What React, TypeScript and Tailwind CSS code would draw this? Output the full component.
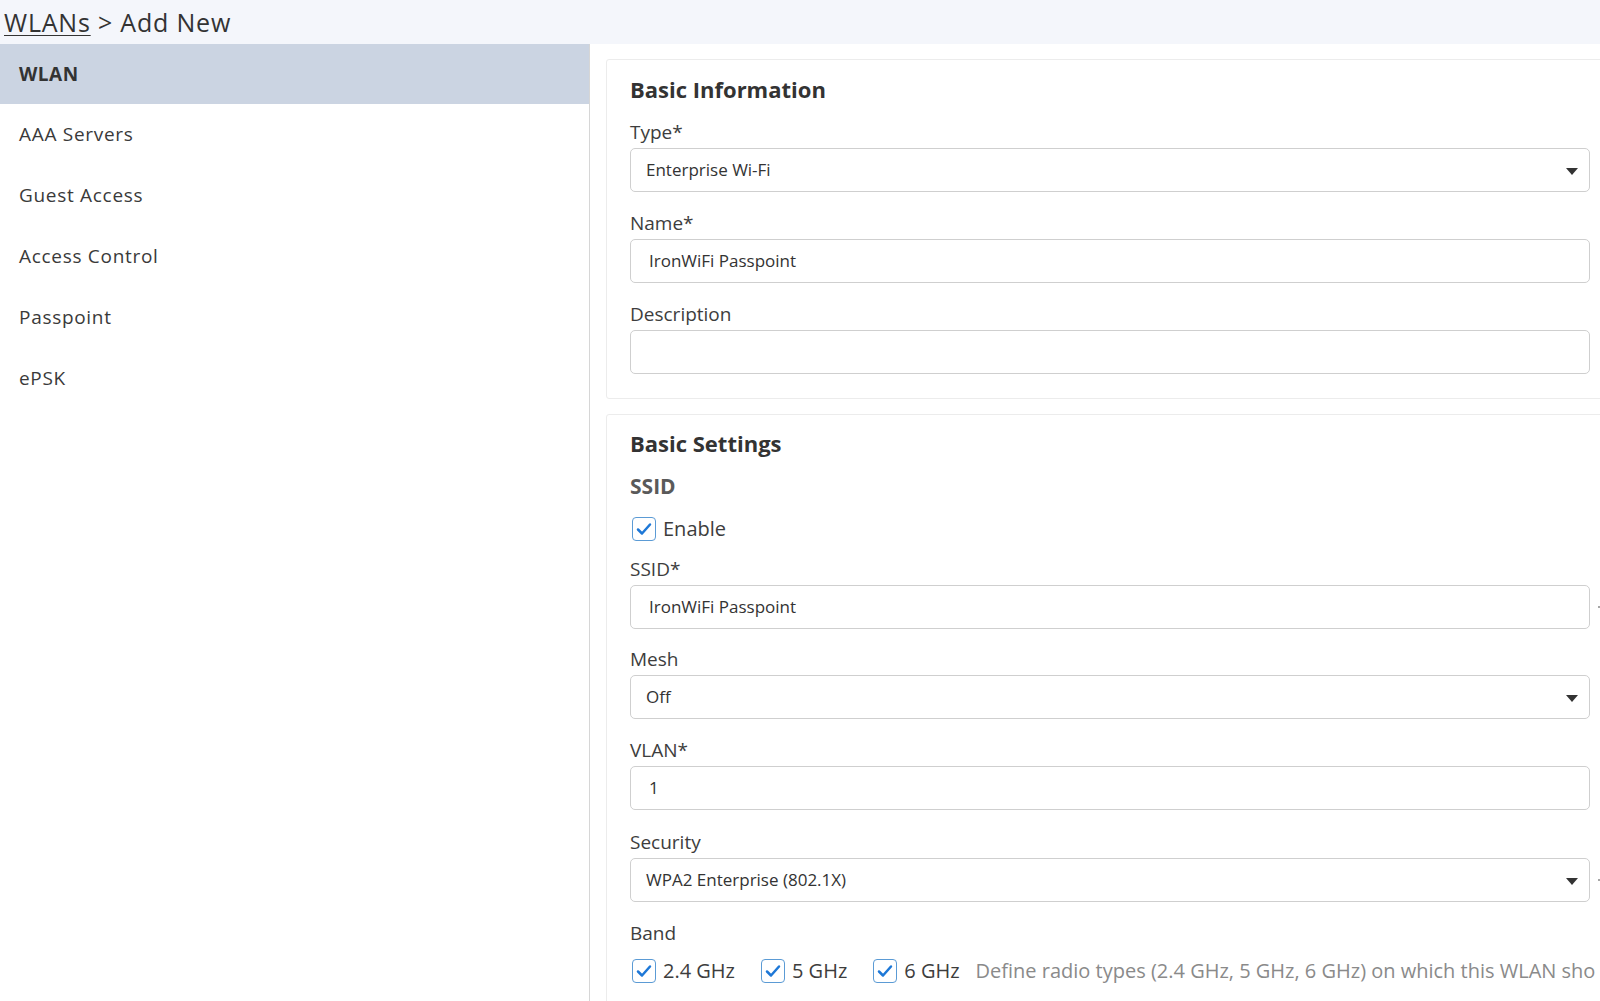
import React from "react";

const font = { fontFamily: '"Open Sans", "Liberation Sans", sans-serif' };

function Caret() {
  return (
    <svg width="12" height="7" viewBox="0 0 12 7" className="absolute right-[11px] top-[19px]">
      <path d="M0 0 H12 L6 7 Z" fill="#333" />
    </svg>
  );
}

function Check() {
  return (
    <span className="flex h-[24px] w-[24px] shrink-0 items-center justify-center rounded-[4px] border border-[#5b9bd5] bg-white">
      <svg width="16" height="14" viewBox="0 0 16 14">
        <path d="M2 7.5 L6 11.5 L14 2.5" fill="none" stroke="#1e78d7" strokeWidth="2.5" strokeLinecap="round" strokeLinejoin="round" />
      </svg>
    </span>
  );
}

function Label({ children, mt = "mt-[19px]" }: { children: React.ReactNode; mt?: string }) {
  return <div className={`${mt} h-[24px] text-[19px] leading-[24px] text-[#3d3d3d]`}>{children}</div>;
}

function Field({ value, select, dot }: { value?: string; select?: boolean; dot?: boolean }) {
  return (
    <div className="mt-[4px] flex items-center">
      <div className="relative h-[44px] w-[960px] shrink-0 rounded-[5px] border border-[#cfcfcf] bg-white">
        <div className={`${select ? "pl-[15px]" : "pl-[18px]"} text-[17px] leading-[42px] text-[#333]`}>{value}</div>
        {select && <Caret />}
      </div>
      {dot && <div className="ml-[8px] h-[2px] w-[2px] shrink-0 rounded-full bg-[#888]" />}
    </div>
  );
}

export default function App() {
  const nav = ["AAA Servers", "Guest Access", "Access Control", "Passpoint", "ePSK"];
  return (
    <div style={font} className="flex h-[1001px] w-[1600px] flex-col overflow-hidden bg-white">
      <div className="flex h-[44px] shrink-0 items-center bg-[#f4f6fb] pl-[4px] text-[25px] leading-[30px] tracking-[0.8px] text-[#333]">
        <span className="underline decoration-1 underline-offset-[3px]">WLANs</span>
        <span>&nbsp;&gt; Add New</span>
      </div>
      <div className="flex flex-1 overflow-hidden">
        <div className="w-[590px] shrink-0 border-r border-[#d6d6d6]">
          <div className="flex h-[60px] items-center bg-[#cbd4e2] pl-[19px] text-[19px] font-bold tracking-[0.5px] text-[#333]">WLAN</div>
          {nav.map((n) => (
            <div key={n} className="flex h-[61px] items-center pl-[19px] text-[19px] tracking-[0.7px] text-[#3a3a3a]">{n}</div>
          ))}
        </div>
        <div className="flex-1 overflow-hidden pl-[16px] pt-[15px]">
          <div className="w-[1010px] rounded-[3px] border border-[#ececec] px-[23px] pb-[24px] pt-[15px]">
            <div className="h-[28px] text-[22px] font-bold leading-[28px] text-[#333]">Basic Information</div>
            <Label mt="mt-[17px]">Type*</Label>
            <Field value="Enterprise Wi-Fi" select />
            <Label>Name*</Label>
            <Field value="IronWiFi Passpoint" />
            <Label>Description</Label>
            <Field />
          </div>
          <div className="mt-[15px] w-[1010px] rounded-[3px] border border-[#ececec] px-[23px] pt-[14px] pb-[40px]">
            <div className="h-[28px] text-[22px] font-bold leading-[28px] text-[#333]">Basic Settings</div>
            <div className="mt-[16px] h-[26px] text-[21px] font-bold leading-[26px] text-[#5a5a5a]">SSID</div>
            <div className="mt-[18px] flex h-[24px] items-center pl-[2px]">
              <Check />
              <span className="ml-[7px] text-[20px] text-[#3d3d3d]">Enable</span>
            </div>
            <Label mt="mt-[16px]">SSID*</Label>
            <Field value="IronWiFi Passpoint" dot />
            <Label mt="mt-[18px]">Mesh</Label>
            <Field value="Off" select />
            <Label mt="mt-[19px]">VLAN*</Label>
            <Field value="1" />
            <Label mt="mt-[20px]">Security</Label>
            <Field value="WPA2 Enterprise (802.1X)" select dot />
            <Label mt="mt-[19px]">Band</Label>
            <div className="mt-[14px] flex h-[24px] items-center whitespace-nowrap pl-[2px] text-[20px]">
              <Check />
              <span className="ml-[7px] text-[#3d3d3d]">2.4 GHz</span>
              <span className="ml-[26px]"><Check /></span>
              <span className="ml-[7px] text-[#3d3d3d]">5 GHz</span>
              <span className="ml-[26px]"><Check /></span>
              <span className="ml-[7px] text-[#3d3d3d]">6 GHz</span>
              <span className="ml-[16px] text-[#8a8a8a]">Define radio types (2.4 GHz, 5 GHz, 6 GHz) on which this WLAN sho</span>
            </div>
          </div>
        </div>
      </div>
    </div>
  );
}
